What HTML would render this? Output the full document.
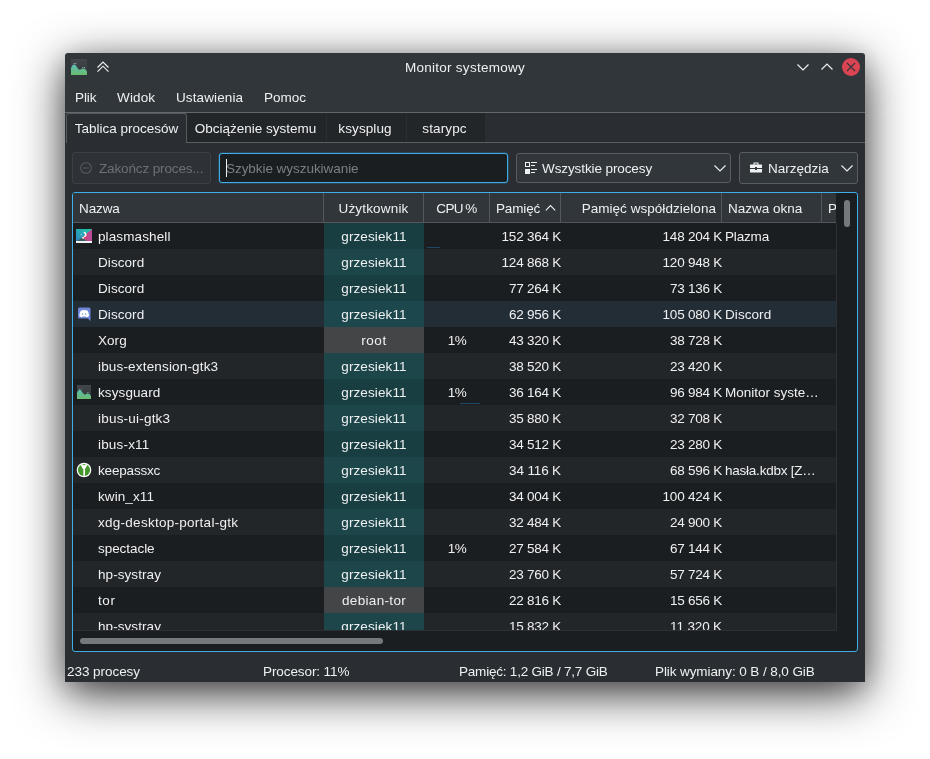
<!DOCTYPE html>
<html lang="pl"><head><meta charset="utf-8"><title>Monitor systemowy</title>
<style>
html,body{margin:0;padding:0;background:#fff;}
body{width:930px;height:759px;overflow:hidden;position:relative;font-family:"Liberation Sans",sans-serif;font-size:13.5px;color:#eff0f1;}
#win{position:absolute;left:65px;top:53px;width:800px;height:629px;background:#31363b;border-radius:3px 3px 0 0;box-shadow:0 12px 48px rgba(0,0,0,.76),0 6px 24px rgba(0,0,0,.18);will-change:transform;}
#win div{position:absolute;box-sizing:border-box;white-space:pre;}
#win svg{position:absolute;overflow:visible;}
#win span{position:relative;top:1px;}
.c{text-align:center;}
.r{text-align:right;}
.dis{color:#6d7074;}
.hd{background:#31363b;border-right:1px solid #54585c;}
</style></head><body>
<div id="win">
<div style="left:0px;top:0px;width:800px;height:30px;line-height:27px;text-align:center;"><span style="letter-spacing:0.26px">Monitor systemowy</span></div>
<svg style="left:6px;top:6px" width="16" height="16" viewBox="0 0 16 16">
<defs><linearGradient id="g1" x1="0" y1="0" x2="0" y2="1"><stop offset="0" stop-color="#43474b"/><stop offset="1" stop-color="#31363b"/></linearGradient>
<linearGradient id="g2" x1="0" y1="0" x2="0" y2="1"><stop offset="0" stop-color="#5abdb4"/><stop offset="1" stop-color="#6bbb6d"/></linearGradient></defs>
<rect width="16" height="16" fill="url(#g1)"/>
<path d="M0 16 L0 9 C1 6.5 2 5.5 3.2 5.5 C5 5.5 6 9 8 10.6 C9.5 11.4 10.5 9.6 12.2 9.6 C13.8 9.6 15 10.8 16 12.5 L16 16 Z" fill="url(#g2)"/>
<g fill="#d9f2ee" opacity=".85"><rect x="2.6" y="4.2" width=".9" height=".9"/><rect x="4.4" y="4.2" width=".9" height=".9"/><rect x="11.4" y="8.2" width=".9" height=".9"/><rect x="13.2" y="8.2" width=".9" height=".9"/></g>
</svg>
<svg style="left:0;top:0" width="800" height="30" fill="none" stroke="#eff0f1" stroke-width="1.15">
<path d="M32.5 14.5 L38 9 L43.5 14.5 M32.5 18.7 L38 13.2 L43.5 18.7"/>
<path d="M732.5 11.5 L738 17 L743.5 11.5"/>
<path d="M756.5 16.5 L762 11 L767.5 16.5"/>
<circle cx="786" cy="14" r="9" fill="#da4453" stroke="none"/>
<path d="M782 10 L790 18 M790 10 L782 18" stroke="#31363b" stroke-width="1.2"/>
</svg>
<div style="left:10px;top:30px;width:120px;height:29px;line-height:28px;"><span style="letter-spacing:-0.07px">Plik</span></div>
<div style="left:52px;top:30px;width:120px;height:29px;line-height:28px;"><span style="letter-spacing:0.14px">Widok</span></div>
<div style="left:111px;top:30px;width:120px;height:29px;line-height:28px;"><span style="letter-spacing:0.12px">Ustawienia</span></div>
<div style="left:199px;top:30px;width:120px;height:29px;line-height:28px;"><span style="letter-spacing:-0.02px">Pomoc</span></div>
<div style="left:0px;top:60px;width:800px;height:569px;background:#2a2e32;"></div>
<div style="left:0px;top:59px;width:800px;height:1px;background:#63686d;"></div>
<div style="left:122px;top:60px;width:298px;height:29px;background:#232629;"></div>
<div style="left:122px;top:89px;width:678px;height:1px;background:#5a5e62;"></div>
<div style="left:261px;top:61px;width:1px;height:28px;background:#2a2d31;"></div>
<div style="left:341px;top:61px;width:1px;height:28px;background:#2a2d31;"></div>
<div style="left:1px;top:60px;width:121px;height:30px;border:1px solid #565a5e;border-bottom:none;border-radius:3px 3px 0 0;background:#2a2e32;"></div>
<div style="left:1px;top:60px;width:121px;height:30px;line-height:29px;text-align:center;"><span>Tablica procesów</span></div>
<div style="left:120.5px;top:60px;width:140px;height:29px;line-height:29px;text-align:center;"><span style="letter-spacing:0.01px">Obciążenie systemu</span></div>
<div style="left:260px;top:60px;width:80px;height:29px;line-height:29px;text-align:center;"><span style="letter-spacing:0.1px">ksysplug</span></div>
<div style="left:340.5px;top:60px;width:78px;height:29px;line-height:29px;text-align:center;"><span style="letter-spacing:0.13px">starypc</span></div>
<div style="left:7px;top:99px;width:139px;height:32px;border:1px solid #3c4044;border-radius:3px;background:#2e3236;"></div>
<svg style="left:15px;top:109px" width="12" height="12" fill="none" stroke="#565a5e" stroke-width="1.1"><circle cx="6" cy="6" r="5.3"/><path d="M3 6 H9"/></svg>
<div class="dis" style="left:34px;top:99px;width:112px;height:32px;line-height:31px;"><span style="letter-spacing:-0.13px">Zakończ proces...</span></div>
<div style="left:154px;top:100px;width:289px;height:30px;border:1px solid #3daee9;border-radius:3px;background:#1b1e20;box-shadow:0 0 0 .5px rgba(61,174,233,.35);"></div>
<div style="left:161px;top:106px;width:1px;height:18px;background:#eff0f1;"></div>
<div style="left:161px;top:100px;width:270px;height:30px;line-height:29px;color:#7b7f83;"><span style="letter-spacing:-0.05px">Szybkie wyszukiwanie</span></div>
<div style="left:451px;top:100px;width:215px;height:30px;border:1px solid #5a5e62;border-radius:3px;background:#31363b;"></div>
<svg style="left:460px;top:109px" width="12" height="12" fill="#eff0f1" stroke="none">
<path d="M0 0h5v5h-5z M1 1v3h3v-3z" fill-rule="evenodd"/><rect x="6" y="0" width="6" height="1"/><rect x="6" y="3" width="4" height="1"/>
<rect x="0" y="7" width="5" height="5"/><rect x="6" y="7" width="6" height="1"/><rect x="6" y="10" width="4" height="1"/></svg>
<div style="left:477px;top:100px;width:170px;height:30px;line-height:29px;"><span style="letter-spacing:-0.1px">Wszystkie procesy</span></div>
<div style="left:674px;top:99px;width:119px;height:32px;border:1px solid #5a5e62;border-radius:3px;background:#31363b;"></div>
<svg style="left:684px;top:108px" width="14" height="14" fill="#eff0f1"><path d="M4.5 1.5h5v2h3.5v3.5h-5v-1h-2v1h-5v-3.5h3.5z M5.6 2.5v1h2.8v-1z" fill-rule="evenodd"/><path d="M1 8h5v1h2v-1h5v3.5h-12z"/></svg>
<div style="left:703px;top:99px;width:70px;height:32px;line-height:31px;"><span style="letter-spacing:-0.01px">Narzędzia</span></div>
<svg style="left:0;top:0" width="800" height="200" fill="none" stroke="#eff0f1" stroke-width="1.15"><path d="M649.5 112.5 L655 118 L660.5 112.5"/><path d="M776.5 112.5 L782 118 L787.5 112.5"/></svg>
<div style="left:7px;top:139px;width:786px;height:460px;border:1px solid #3daee9;border-radius:3px;background:#1b1e20;"></div>
<div style="left:8px;top:140px;width:763px;height:30px;background:#31363b;border-bottom:1px solid #54585c;border-radius:2px 0 0 0;"></div>
<div class="hd" style="left:8px;top:140px;width:251px;height:29px;line-height:29px;padding-left:6px;border-radius:2px 0 0 0;"><span style="letter-spacing:-0.1px">Nazwa</span></div>
<div class="hd" style="left:259px;top:140px;width:100px;height:29px;line-height:29px;text-align:center;"><span style="letter-spacing:0.17px">Użytkownik</span></div>
<div class="hd" style="left:359px;top:140px;width:66px;height:29px;line-height:29px;text-align:center;"><span style="letter-spacing:-.6px;word-spacing:-.9px">CPU %</span></div>
<div class="hd" style="left:425px;top:140px;width:71px;height:29px;line-height:29px;padding-left:6px;"><span style="letter-spacing:-0.14px">Pamięć</span></div>
<div class="hd" style="left:496px;top:140px;width:161px;height:29px;line-height:29px;text-align:right;padding-right:5px;"><span style="letter-spacing:0.04px">Pamięć współdzielona</span></div>
<div class="hd" style="left:657px;top:140px;width:100px;height:29px;line-height:29px;padding-left:6px;"><span style="letter-spacing:-0.01px">Nazwa okna</span></div>
<div class="hd" style="left:757px;top:140px;width:14px;height:29px;line-height:29px;padding-left:6px;border-right:none;overflow:hidden;"><span style="letter-spacing:-0.6px">P</span></div>
<svg style="left:0;top:0" width="800" height="200" fill="none" stroke="#eff0f1" stroke-width="1.15"><path d="M480.800 157.300 L485.500 152.600 L490.200 157.300"/></svg>
<div style="left:8px;top:170px;width:763px;height:407px;overflow:hidden;">
<div style="left:0px;top:0px;width:763px;height:26px;background:#1b1e20;"></div>
<div style="left:251px;top:0px;width:100px;height:26px;background:#183e42;line-height:26px;text-align:center;"><span style="letter-spacing:0.12px">grzesiek11</span></div>
<div style="left:25px;top:0px;width:225px;height:26px;line-height:26px;"><span style="letter-spacing:0.11px">plasmashell</span></div>
<div style="left:417px;top:0px;width:71px;height:26px;line-height:26px;text-align:right;"><span style="letter-spacing:-0.24px">152 364 K</span></div>
<div style="left:488px;top:0px;width:161px;height:26px;line-height:26px;text-align:right;"><span style="letter-spacing:-0.24px">148 204 K</span></div>
<div style="left:652px;top:0px;width:110px;height:26px;line-height:26px;"><span style="letter-spacing:-0.16px">Plazma</span></div>
<svg style="left:3px;top:6px" width="16" height="14" viewBox="0 0 16 14"><defs><linearGradient id="p1" x1="0" y1="1" x2="1" y2="0"><stop offset="0" stop-color="#2d86c8"/><stop offset="1" stop-color="#1cc9a0"/></linearGradient><linearGradient id="p2" x1="0" y1="0" x2="1" y2="0"><stop offset="0" stop-color="#d9426a"/><stop offset="1" stop-color="#b64b9e"/></linearGradient></defs><rect width="16" height="12" fill="url(#p1)"/><path d="M16 0V12H10.500L6 8.600z" fill="url(#p2)"/><path d="M1 12L6 8.600L10.500 12z" fill="#3d5a5c"/><rect y="12" width="16" height="2" fill="#eef1f1"/><path d="M8.300 3.500A2.100 2.100 0 0 1 8.800 7.300" fill="none" stroke="#fff" stroke-width="1.500" stroke-linecap="round"/><circle cx="7.100" cy="8.700" r=".95" fill="#fff"/><circle cx="5.200" cy="5.700" r=".6" fill="#dff" opacity=".7"/></svg>
<div style="left:0px;top:26px;width:763px;height:26px;background:#232629;"></div>
<div style="left:251px;top:26px;width:100px;height:26px;background:#1c464a;line-height:26px;text-align:center;"><span style="letter-spacing:0.12px">grzesiek11</span></div>
<div style="left:25px;top:26px;width:225px;height:26px;line-height:26px;"><span style="letter-spacing:0.07px">Discord</span></div>
<div style="left:417px;top:26px;width:71px;height:26px;line-height:26px;text-align:right;"><span style="letter-spacing:-0.24px">124 868 K</span></div>
<div style="left:488px;top:26px;width:161px;height:26px;line-height:26px;text-align:right;"><span style="letter-spacing:-0.24px">120 948 K</span></div>
<div style="left:0px;top:52px;width:763px;height:26px;background:#1b1e20;"></div>
<div style="left:251px;top:52px;width:100px;height:26px;background:#183e42;line-height:26px;text-align:center;"><span style="letter-spacing:0.12px">grzesiek11</span></div>
<div style="left:25px;top:52px;width:225px;height:26px;line-height:26px;"><span style="letter-spacing:0.07px">Discord</span></div>
<div style="left:417px;top:52px;width:71px;height:26px;line-height:26px;text-align:right;"><span style="letter-spacing:-0.26px">77 264 K</span></div>
<div style="left:488px;top:52px;width:161px;height:26px;line-height:26px;text-align:right;"><span style="letter-spacing:-0.26px">73 136 K</span></div>
<div style="left:0px;top:78px;width:763px;height:26px;background:#232d36;"></div>
<div style="left:251px;top:78px;width:100px;height:26px;background:#1c474c;line-height:26px;text-align:center;"><span style="letter-spacing:0.12px">grzesiek11</span></div>
<div style="left:25px;top:78px;width:225px;height:26px;line-height:26px;"><span style="letter-spacing:0.07px">Discord</span></div>
<div style="left:417px;top:78px;width:71px;height:26px;line-height:26px;text-align:right;"><span style="letter-spacing:-0.26px">62 956 K</span></div>
<div style="left:488px;top:78px;width:161px;height:26px;line-height:26px;text-align:right;"><span style="letter-spacing:-0.24px">105 080 K</span></div>
<div style="left:652px;top:78px;width:110px;height:26px;line-height:26px;"><span style="letter-spacing:0.07px">Discord</span></div>
<svg style="left:4px;top:83.30000000000001px" width="16" height="16" viewBox="0 0 16 16"><path d="M2.500 1.600h9.500a1.500 1.500 0 0 1 1.500 1.500V15l-2.800-2.600H2.500A1.500 1.500 0 0 1 1 10.900V3.100a1.500 1.500 0 0 1 1.500-1.500z" fill="#7086d8"/><path d="M4 4.600c1-.5 2-.7 3.200-.7s2.200.2 3.200.7c1 1.500 1.600 3.400 1.600 5.400-.8.800-1.700 1.200-2.700 1.300l-.5-.8c-1 .2-2.200.2-3.200 0l-.5.800c-1-.1-1.900-.5-2.700-1.300 0-2 .6-3.900 1.600-5.400z" fill="#fff"/><ellipse cx="5.700" cy="8" rx=".6" ry=".85" fill="#7086d8"/><ellipse cx="8.700" cy="8" rx=".6" ry=".85" fill="#7086d8"/></svg>
<div style="left:0px;top:104px;width:763px;height:26px;background:#1b1e20;"></div>
<div style="left:251px;top:104px;width:100px;height:26px;background:#434547;line-height:26px;text-align:center;"><span style="letter-spacing:0.56px">root</span></div>
<div style="left:25px;top:104px;width:225px;height:26px;line-height:26px;"><span style="letter-spacing:0.04px">Xorg</span></div>
<div style="left:351px;top:104px;width:66px;height:26px;line-height:26px;text-align:center;"><span style="letter-spacing:-0.6px">1%</span></div>
<div style="left:417px;top:104px;width:71px;height:26px;line-height:26px;text-align:right;"><span style="letter-spacing:-0.26px">43 320 K</span></div>
<div style="left:488px;top:104px;width:161px;height:26px;line-height:26px;text-align:right;"><span style="letter-spacing:-0.26px">38 728 K</span></div>
<div style="left:0px;top:130px;width:763px;height:26px;background:#232629;"></div>
<div style="left:251px;top:130px;width:100px;height:26px;background:#1c464a;line-height:26px;text-align:center;"><span style="letter-spacing:0.12px">grzesiek11</span></div>
<div style="left:25px;top:130px;width:225px;height:26px;line-height:26px;"><span style="letter-spacing:0.17px">ibus-extension-gtk3</span></div>
<div style="left:417px;top:130px;width:71px;height:26px;line-height:26px;text-align:right;"><span style="letter-spacing:-0.26px">38 520 K</span></div>
<div style="left:488px;top:130px;width:161px;height:26px;line-height:26px;text-align:right;"><span style="letter-spacing:-0.26px">23 420 K</span></div>
<div style="left:0px;top:156px;width:763px;height:26px;background:#1b1e20;"></div>
<div style="left:251px;top:156px;width:100px;height:26px;background:#183e42;line-height:26px;text-align:center;"><span style="letter-spacing:0.12px">grzesiek11</span></div>
<div style="left:25px;top:156px;width:225px;height:26px;line-height:26px;"><span style="letter-spacing:0.1px">ksysguard</span></div>
<div style="left:351px;top:156px;width:66px;height:26px;line-height:26px;text-align:center;"><span style="letter-spacing:-0.6px">1%</span></div>
<div style="left:417px;top:156px;width:71px;height:26px;line-height:26px;text-align:right;"><span style="letter-spacing:-0.26px">36 164 K</span></div>
<div style="left:488px;top:156px;width:161px;height:26px;line-height:26px;text-align:right;"><span style="letter-spacing:-0.26px">96 984 K</span></div>
<div style="left:652px;top:156px;width:110px;height:26px;line-height:26px;"><span style="letter-spacing:-0.01px">Monitor syste…</span></div>
<svg style="left:4px;top:162px" width="14" height="14" viewBox="0 0 16 16"><rect width="16" height="16" fill="url(#g1)"/><path d="M0 16 L0 9 C1 6.500 2 5.500 3.200 5.500 C5 5.500 6 9 8 10.600 C9.500 11.400 10.500 9.600 12.200 9.600 C13.800 9.600 15 10.800 16 12.500 L16 16 Z" fill="url(#g2)"/><g fill="#d9f2ee" opacity=".6"><rect x="2.600" y="4.200" width=".9" height=".9"/><rect x="4.400" y="4.200" width=".9" height=".9"/><rect x="11.400" y="8.200" width=".9" height=".9"/><rect x="13.200" y="8.200" width=".9" height=".9"/></g></svg>
<div style="left:0px;top:182px;width:763px;height:26px;background:#232629;"></div>
<div style="left:251px;top:182px;width:100px;height:26px;background:#1c464a;line-height:26px;text-align:center;"><span style="letter-spacing:0.12px">grzesiek11</span></div>
<div style="left:25px;top:182px;width:225px;height:26px;line-height:26px;"><span style="letter-spacing:0.21px">ibus-ui-gtk3</span></div>
<div style="left:417px;top:182px;width:71px;height:26px;line-height:26px;text-align:right;"><span style="letter-spacing:-0.26px">35 880 K</span></div>
<div style="left:488px;top:182px;width:161px;height:26px;line-height:26px;text-align:right;"><span style="letter-spacing:-0.26px">32 708 K</span></div>
<div style="left:0px;top:208px;width:763px;height:26px;background:#1b1e20;"></div>
<div style="left:251px;top:208px;width:100px;height:26px;background:#183e42;line-height:26px;text-align:center;"><span style="letter-spacing:0.12px">grzesiek11</span></div>
<div style="left:25px;top:208px;width:225px;height:26px;line-height:26px;"><span style="letter-spacing:0.18px">ibus-x11</span></div>
<div style="left:417px;top:208px;width:71px;height:26px;line-height:26px;text-align:right;"><span style="letter-spacing:-0.26px">34 512 K</span></div>
<div style="left:488px;top:208px;width:161px;height:26px;line-height:26px;text-align:right;"><span style="letter-spacing:-0.26px">23 280 K</span></div>
<div style="left:0px;top:234px;width:763px;height:26px;background:#232629;"></div>
<div style="left:251px;top:234px;width:100px;height:26px;background:#1c464a;line-height:26px;text-align:center;"><span style="letter-spacing:0.12px">grzesiek11</span></div>
<div style="left:25px;top:234px;width:225px;height:26px;line-height:26px;"><span style="letter-spacing:-0.18px">keepassxc</span></div>
<div style="left:417px;top:234px;width:71px;height:26px;line-height:26px;text-align:right;"><span style="letter-spacing:-0.14px">34 116 K</span></div>
<div style="left:488px;top:234px;width:161px;height:26px;line-height:26px;text-align:right;"><span style="letter-spacing:-0.26px">68 596 K</span></div>
<div style="left:652px;top:234px;width:110px;height:26px;line-height:26px;"><span style="letter-spacing:-0.23px">hasła.kdbx [Z…</span></div>
<svg style="left:3px;top:239px" width="16" height="16" viewBox="0 0 16 16"><circle cx="8" cy="8" r="7.300" fill="#fff"/><circle cx="8" cy="8" r="6.100" fill="#45962b"/><path d="M4.500 2.400h7L9 7.200v6L8 14.200l-1-1V7.200z" fill="#fff"/><ellipse cx="8" cy="2.700" rx="1" ry=".55" fill="#45962b"/><path d="M7.100 7v6.200L8 14V7z" fill="#b9d9ab"/></svg>
<div style="left:0px;top:260px;width:763px;height:26px;background:#1b1e20;"></div>
<div style="left:251px;top:260px;width:100px;height:26px;background:#183e42;line-height:26px;text-align:center;"><span style="letter-spacing:0.12px">grzesiek11</span></div>
<div style="left:25px;top:260px;width:225px;height:26px;line-height:26px;"><span style="letter-spacing:0.09px">kwin_x11</span></div>
<div style="left:417px;top:260px;width:71px;height:26px;line-height:26px;text-align:right;"><span style="letter-spacing:-0.26px">34 004 K</span></div>
<div style="left:488px;top:260px;width:161px;height:26px;line-height:26px;text-align:right;"><span style="letter-spacing:-0.24px">100 424 K</span></div>
<div style="left:0px;top:286px;width:763px;height:26px;background:#232629;"></div>
<div style="left:251px;top:286px;width:100px;height:26px;background:#1c464a;line-height:26px;text-align:center;"><span style="letter-spacing:0.12px">grzesiek11</span></div>
<div style="left:25px;top:286px;width:225px;height:26px;line-height:26px;"><span style="letter-spacing:0.27px">xdg-desktop-portal-gtk</span></div>
<div style="left:417px;top:286px;width:71px;height:26px;line-height:26px;text-align:right;"><span style="letter-spacing:-0.26px">32 484 K</span></div>
<div style="left:488px;top:286px;width:161px;height:26px;line-height:26px;text-align:right;"><span style="letter-spacing:-0.26px">24 900 K</span></div>
<div style="left:0px;top:312px;width:763px;height:26px;background:#1b1e20;"></div>
<div style="left:251px;top:312px;width:100px;height:26px;background:#183e42;line-height:26px;text-align:center;"><span style="letter-spacing:0.12px">grzesiek11</span></div>
<div style="left:25px;top:312px;width:225px;height:26px;line-height:26px;"><span style="letter-spacing:-0.05px">spectacle</span></div>
<div style="left:351px;top:312px;width:66px;height:26px;line-height:26px;text-align:center;"><span style="letter-spacing:-0.6px">1%</span></div>
<div style="left:417px;top:312px;width:71px;height:26px;line-height:26px;text-align:right;"><span style="letter-spacing:-0.26px">27 584 K</span></div>
<div style="left:488px;top:312px;width:161px;height:26px;line-height:26px;text-align:right;"><span style="letter-spacing:-0.26px">67 144 K</span></div>
<div style="left:0px;top:338px;width:763px;height:26px;background:#232629;"></div>
<div style="left:251px;top:338px;width:100px;height:26px;background:#1c464a;line-height:26px;text-align:center;"><span style="letter-spacing:0.12px">grzesiek11</span></div>
<div style="left:25px;top:338px;width:225px;height:26px;line-height:26px;"><span style="letter-spacing:0.07px">hp-systray</span></div>
<div style="left:417px;top:338px;width:71px;height:26px;line-height:26px;text-align:right;"><span style="letter-spacing:-0.26px">23 760 K</span></div>
<div style="left:488px;top:338px;width:161px;height:26px;line-height:26px;text-align:right;"><span style="letter-spacing:-0.26px">57 724 K</span></div>
<div style="left:0px;top:364px;width:763px;height:26px;background:#1b1e20;"></div>
<div style="left:251px;top:364px;width:100px;height:26px;background:#434547;line-height:26px;text-align:center;"><span style="letter-spacing:0.33px">debian-tor</span></div>
<div style="left:25px;top:364px;width:225px;height:26px;line-height:26px;"><span style="letter-spacing:0.6px">tor</span></div>
<div style="left:417px;top:364px;width:71px;height:26px;line-height:26px;text-align:right;"><span style="letter-spacing:-0.26px">22 816 K</span></div>
<div style="left:488px;top:364px;width:161px;height:26px;line-height:26px;text-align:right;"><span style="letter-spacing:-0.26px">15 656 K</span></div>
<div style="left:0px;top:390px;width:763px;height:26px;background:#232629;"></div>
<div style="left:251px;top:390px;width:100px;height:26px;background:#1c464a;line-height:26px;text-align:center;"><span style="letter-spacing:0.12px">grzesiek11</span></div>
<div style="left:25px;top:390px;width:225px;height:26px;line-height:26px;"><span style="letter-spacing:0.07px">hp-systray</span></div>
<div style="left:417px;top:390px;width:71px;height:26px;line-height:26px;text-align:right;"><span style="letter-spacing:-0.26px">15 832 K</span></div>
<div style="left:488px;top:390px;width:161px;height:26px;line-height:26px;text-align:right;"><span style="letter-spacing:-0.14px">11 320 K</span></div>
<div style="left:354px;top:24px;width:13px;height:1px;background:#1d4866;"></div>
<div style="left:387px;top:180px;width:20px;height:1px;background:#1d4866;"></div>
</div>
<div style="left:771px;top:170px;width:1px;height:408px;background:#2c3034;"></div>
<div style="left:8px;top:577px;width:764px;height:1px;background:#2c3034;"></div>
<div style="left:779px;top:147px;width:6px;height:27px;background:#76797c;border-radius:3px;"></div>
<div style="left:15px;top:585px;width:303px;height:6px;background:#76797c;border-radius:3px;"></div>
<div style="left:2px;top:607px;width:196px;height:22px;line-height:22px;"><span style="letter-spacing:-0.05px">233 procesy</span></div>
<div style="left:198px;top:607px;width:196px;height:22px;line-height:22px;"><span style="letter-spacing:-0.09px">Procesor: 11%</span></div>
<div style="left:394px;top:607px;width:196px;height:22px;line-height:22px;"><span style="letter-spacing:-0.21px">Pamięć: 1,2 GiB / 7,7 GiB</span></div>
<div style="left:590px;top:607px;width:196px;height:22px;line-height:22px;"><span style="letter-spacing:-0.09px">Plik wymiany: 0 B / 8,0 GiB</span></div>
</div>
</body></html>
